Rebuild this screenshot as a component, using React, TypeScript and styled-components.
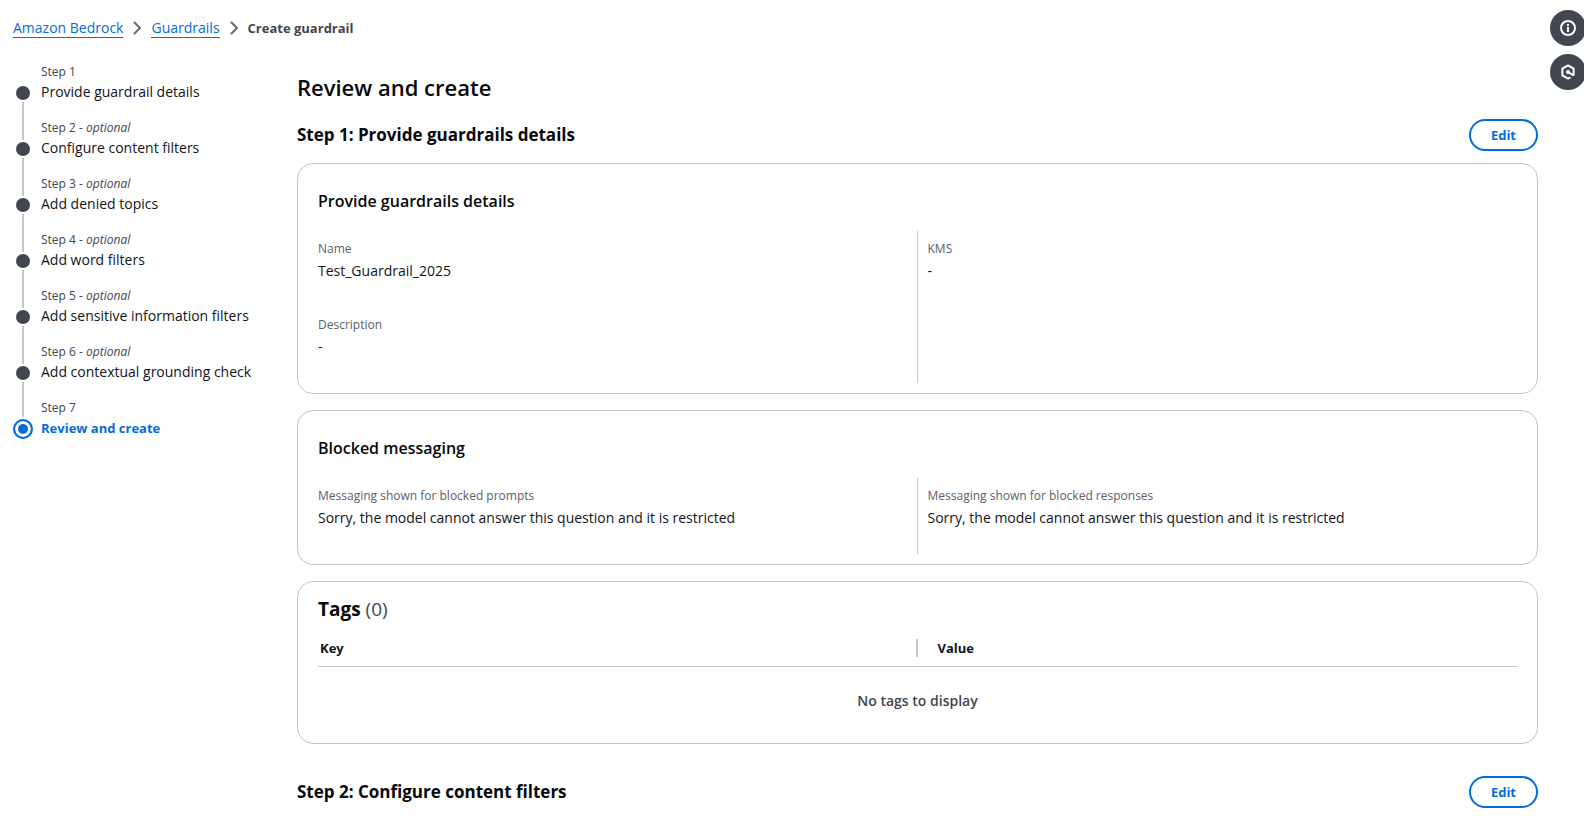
import React from 'react';
import styled, { createGlobalStyle, css } from 'styled-components';

const color = {
  link: '#006ce0',
  heading: '#06080c',
  text: '#0f141a',
  muted: '#424650',
  label: '#5c606b',
  border: '#c6c6cd',
  dark: '#424650',
};

const GlobalStyle = createGlobalStyle`
  *, *::before, *::after { box-sizing: border-box; }
  body {
    margin: 0;
    background: #fff;
    color: ${color.text};
    font-family: 'Open Sans', 'Noto Sans', sans-serif;
    font-size: 14px;
    line-height: 20px;
  }
  h1, h2, h3, p, ol, ul, dl, dd { margin: 0; padding: 0; }
  ol { list-style: none; }
`;

const Page = styled.div`
  display: flex;
  flex-direction: column;
  gap: 24px;
  padding: 18px 46px 12px 13px;
`;

const Crumbs = styled.ol`
  display: flex;
  align-items: center;
`;

const Crumb = styled.li`
  display: flex;
  align-items: center;
`;

const CrumbLink = styled.a`
  border-bottom: 1px solid ${color.link};
  color: ${color.link};
  line-height: 19px;
  text-decoration: none;
`;

const CrumbCurrent = styled.span`
  color: ${color.muted};
  font-size: 13px;
  font-weight: 700;
`;

const Chevron = styled.svg`
  width: 16px;
  height: 16px;
  margin: 0 6px;
  fill: none;
  stroke: #656871;
  stroke-width: 2;
`;

const Columns = styled.div`
  display: grid;
  grid-template-columns: 244px minmax(0, 1fr);
  column-gap: 40px;
  align-items: start;
`;

const Steps = styled.ol`
  display: flex;
  flex-direction: column;
`;

const Step = styled.li`
  display: grid;
  grid-template-columns: 20px 1fr;
  grid-template-rows: 20px 22px 14px;
  column-gap: 8px;
  align-items: center;
  white-space: nowrap;
`;

const StepLabel = styled.span`
  grid-column: 2;
  color: ${color.muted};
  font-size: 12px;
`;

const Dot = styled.span<{ $current?: boolean }>`
  display: block;
  justify-self: center;
  width: 14px;
  height: 14px;
  border-radius: 50%;
  background: ${color.dark};
  ${({ $current }) =>
    $current &&
    css`
      width: 20px;
      height: 20px;
      border: 2px solid ${color.link};
      background: ${color.link};
      box-shadow: inset 0 0 0 3px #fff;
    `}
`;

const Connector = styled.span<{ $align: 'start' | 'end'; $length: number }>`
  grid-column: 1;
  justify-self: center;
  align-self: ${({ $align }) => $align};
  width: 2px;
  height: ${({ $length }) => $length}px;
  background: ${color.border};
`;

const StepTitle = styled.a<{ $current?: boolean }>`
  align-self: start;
  color: ${({ $current }) => ($current ? color.link : color.text)};
  font-weight: ${({ $current }) => ($current ? 700 : 400)};
  font-size: ${({ $current }) => ($current ? '13px' : '14px')};
  text-decoration: none;
`;

const Spacer = styled.span`
  grid-column: 1;
`;

const Main = styled.main`
  display: flex;
  flex-direction: column;
  padding-top: 9px;
`;

const PageTitle = styled.h1`
  color: ${color.heading};
  font-size: 22px;
  font-weight: 600;
  line-height: 32px;
`;

const Section = styled.section`
  display: flex;
  flex-direction: column;
  gap: 16px;
  padding-top: 16px;

  & + & {
    padding-top: 32px;
  }
`;

const SectionHeader = styled.div`
  display: flex;
  align-items: center;
  justify-content: space-between;
  margin-bottom: -4px;
`;

const SectionTitle = styled.h2`
  color: ${color.heading};
  font-size: 17px;
  font-weight: 700;
  line-height: 24px;
`;

const EditButton = styled.button`
  height: 32px;
  padding: 0 20px;
  border: 2px solid ${color.link};
  border-radius: 16px;
  background: #fff;
  color: ${color.link};
  font: 700 13px/20px 'Open Sans', 'Noto Sans', sans-serif;
  cursor: pointer;
`;

const Card = styled.section<{ $compact?: boolean }>`
  padding: ${({ $compact }) => ($compact ? '15px 20px 32px' : '27px 20px 10px')};
  border: 1px solid ${color.border};
  border-radius: 16px;
`;

const CardTitle = styled.h3`
  margin-bottom: 20px;
  color: ${color.heading};
  font-size: 16px;
  font-weight: 600;
  line-height: 20px;
`;

const Fields = styled.div`
  display: grid;
  grid-template-columns: 1fr 1fr;
`;

const FieldColumn = styled.dl`
  &:first-child {
    border-right: 1px solid ${color.border};
  }

  & + & {
    padding-left: 10px;
  }
`;

const Field = styled.div`
  padding: 8px 0 24px;
`;

const FieldLabel = styled.dt`
  color: ${color.label};
  font-size: 12px;
  line-height: 20px;
`;

const FieldValue = styled.dd`
  line-height: 24px;
`;

const TagsTitle = styled.h3`
  color: ${color.heading};
  font-size: 19px;
  font-weight: 700;
  line-height: 24px;
`;

const Count = styled.span`
  color: ${color.muted};
  font-weight: 400;
`;

const TagTable = styled.table`
  width: 100%;
  margin-top: 9px;
  border-collapse: collapse;
  table-layout: fixed;
`;

const HeadCell = styled.th`
  padding: 9px 0;
  border-bottom: 1px solid ${color.border};
  font-size: 13px;
  font-weight: 700;
  text-align: left;
`;

const HeadLabel = styled.span`
  display: block;
  padding-left: 2px;
  line-height: 18px;

  ${HeadCell}:first-child & {
    border-right: 2px solid ${color.border};
  }

  ${HeadCell} + ${HeadCell} & {
    padding-left: 20px;
  }
`;

const EmptyCell = styled.td`
  padding: 24px 0 0;
  color: ${color.muted};
  font-size: 14px;
  font-weight: 600;
  text-align: center;
`;

const Tools = styled.aside`
  position: fixed;
  top: 10px;
  right: -2px;
  display: flex;
  flex-direction: column;
  gap: 8px;
`;

const ToolButton = styled.button`
  display: grid;
  place-items: center;
  width: 36px;
  height: 36px;
  padding: 0;
  border: 0;
  border-radius: 50%;
  background: ${color.dark};
  cursor: pointer;
`;

const ToolIcon = styled.svg`
  width: 16px;
  height: 16px;
  fill: none;
  stroke: #fff;
  stroke-width: 2;
`;

const steps = [
  { title: 'Provide guardrail details', optional: false },
  { title: 'Configure content filters', optional: true },
  { title: 'Add denied topics', optional: true },
  { title: 'Add word filters', optional: true },
  { title: 'Add sensitive information filters', optional: true },
  { title: 'Add contextual grounding check', optional: true },
  { title: 'Review and create', optional: false },
];

const blockedMessage = 'Sorry, the model cannot answer this question and it is restricted';

function Separator() {
  return (
    <Chevron viewBox="0 0 16 16" aria-hidden="true">
      <path d="M5 2l6 6-6 6" />
    </Chevron>
  );
}

function StepNavigation() {
  return (
    <nav aria-label="Steps">
      <Steps>
        {steps.map(({ title, optional }, index) => {
          const current = index === steps.length - 1;
          return (
            <Step key={title}>
              {index > 0 ? <Connector $align="start" $length={current ? 19 : 22} /> : <Spacer />}
              <StepLabel>
                Step {index + 1}
                {optional && (
                  <>
                    {' - '}
                    <em>optional</em>
                  </>
                )}
              </StepLabel>
              <Dot $current={current} />
              <StepTitle href="#" $current={current} aria-current={current ? 'step' : undefined}>
                {title}
              </StepTitle>
              {!current && <Connector $align="end" $length={16} />}
            </Step>
          );
        })}
      </Steps>
    </nav>
  );
}

function LabeledValue({ label, value }: { label: string; value: string }) {
  return (
    <Field>
      <FieldLabel>{label}</FieldLabel>
      <FieldValue>{value}</FieldValue>
    </Field>
  );
}

function StepHeader({ title }: { title: string }) {
  return (
    <SectionHeader>
      <SectionTitle>{title}</SectionTitle>
      <EditButton type="button" aria-label={`Edit ${title}`}>
        Edit
      </EditButton>
    </SectionHeader>
  );
}

export default function App() {
  return (
    <>
      <GlobalStyle />
      <Page>
        <nav aria-label="Breadcrumbs">
          <Crumbs>
            <Crumb>
              <CrumbLink href="#">Amazon Bedrock</CrumbLink>
              <Separator />
            </Crumb>
            <Crumb>
              <CrumbLink href="#">Guardrails</CrumbLink>
              <Separator />
            </Crumb>
            <Crumb>
              <CrumbCurrent aria-current="page">Create guardrail</CrumbCurrent>
            </Crumb>
          </Crumbs>
        </nav>
        <Columns>
          <StepNavigation />
          <Main>
            <PageTitle>Review and create</PageTitle>
            <Section>
              <StepHeader title="Step 1: Provide guardrails details" />
              <Card>
                <CardTitle>Provide guardrails details</CardTitle>
                <Fields>
                  <FieldColumn>
                    <LabeledValue label="Name" value="Test_Guardrail_2025" />
                    <LabeledValue label="Description" value="-" />
                  </FieldColumn>
                  <FieldColumn>
                    <LabeledValue label="KMS" value="-" />
                  </FieldColumn>
                </Fields>
              </Card>
              <Card>
                <CardTitle>Blocked messaging</CardTitle>
                <Fields>
                  <FieldColumn>
                    <LabeledValue label="Messaging shown for blocked prompts" value={blockedMessage} />
                  </FieldColumn>
                  <FieldColumn>
                    <LabeledValue label="Messaging shown for blocked responses" value={blockedMessage} />
                  </FieldColumn>
                </Fields>
              </Card>
              <Card $compact>
                <TagsTitle>
                  Tags <Count>(0)</Count>
                </TagsTitle>
                <TagTable>
                  <thead>
                    <tr>
                      <HeadCell scope="col">
                        <HeadLabel>Key</HeadLabel>
                      </HeadCell>
                      <HeadCell scope="col">
                        <HeadLabel>Value</HeadLabel>
                      </HeadCell>
                    </tr>
                  </thead>
                  <tbody>
                    <tr>
                      <EmptyCell colSpan={2}>No tags to display</EmptyCell>
                    </tr>
                  </tbody>
                </TagTable>
              </Card>
            </Section>
            <Section>
              <StepHeader title="Step 2: Configure content filters" />
            </Section>
          </Main>
        </Columns>
      </Page>
      <Tools aria-label="Help tools">
        <ToolButton type="button" aria-label="Info">
          <ToolIcon viewBox="0 0 16 16">
            <circle cx="8" cy="8" r="7" />
            <path d="M8 7v5M8 4v2" />
          </ToolIcon>
        </ToolButton>
        <ToolButton type="button" aria-label="Assistant">
          <ToolIcon viewBox="0 0 16 16">
            <path d="M13.6 11.4V4.6L8 1.3 2.4 4.6v6.8L8 14.7l2.4-1.4" />
            <path d="M8 8l5.6 3.3" />
            <circle cx="8" cy="8" r="1" fill="#fff" />
          </ToolIcon>
        </ToolButton>
      </Tools>
    </>
  );
}
